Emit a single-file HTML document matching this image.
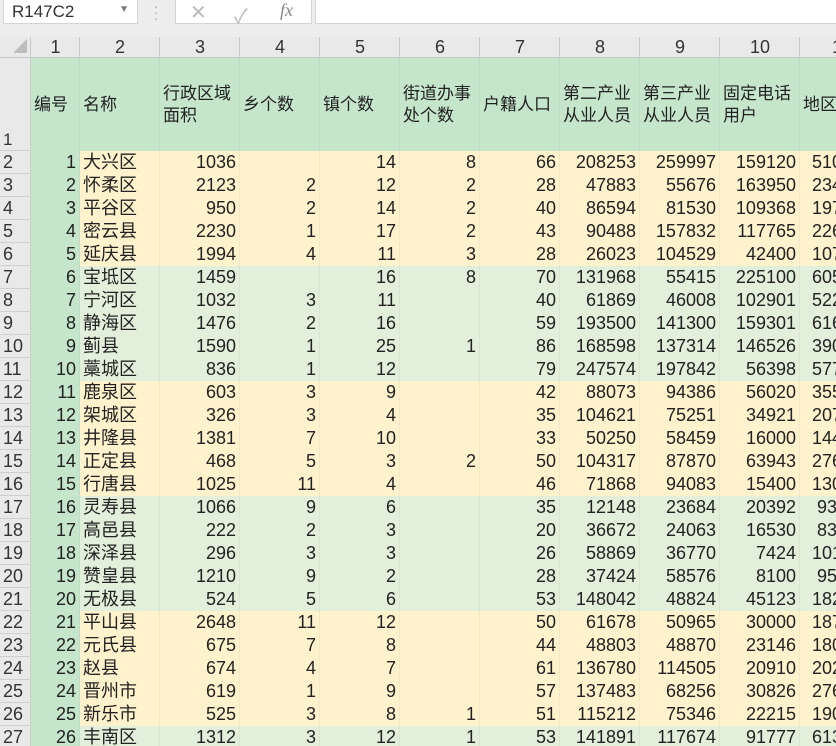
<!DOCTYPE html>
<html><head><meta charset="utf-8"><style>
body{margin:0;width:836px;height:746px;overflow:hidden;background:#ededed;font-family:"Liberation Sans","Noto Sans CJK SC",sans-serif;position:relative}
.box{position:absolute;background:#fff;border:1px solid #d4d4d4;top:-1px;height:23px}
#grid{position:absolute;left:0;top:37px;width:836px;height:709px;overflow:hidden}
table{border-collapse:collapse;table-layout:fixed;width:911px}
td{padding:0 4px;white-space:nowrap;overflow:hidden;font-size:18px;color:#222;height:23px;line-height:23px;text-align:right;border:0;box-shadow:inset -1px 0 rgba(0,0,0,0.04)}
tr.ch td{height:21px;line-height:21px;background:#e9e9e9;color:#333;text-align:center;box-shadow:inset -1px -1px #c8c8c8;font-size:18px}
td.rh{background:#e9e9e9;color:#333;text-align:left;padding-left:3px;box-shadow:inset -1px -1px #cfcfcf;font-size:18px}
tr.h td{height:93px;background:#c6e6cc;text-align:left;line-height:22px;font-size:17px;padding:0 3px;white-space:normal}
tr.h td.rh{background:#e9e9e9;vertical-align:bottom;line-height:22px}
td.c1{background:#c6e6cc}
tr.o td{background:#fff2cc}
tr.g td{background:#e2efda}
tr.o td.rh,tr.g td.rh{background:#e9e9e9}
tr.o td.c1,tr.g td.c1{background:#c6e6cc}
td.n{text-align:left;padding-left:3px}
td.l{text-align:left;padding-left:12px}
</style></head><body>
<div class="box" style="left:3px;width:133px"><span style="position:absolute;left:8px;top:2px;font-size:17px;color:#333">R147C2</span><span style="position:absolute;right:8px;top:4px;font-size:10px;color:#777">▼</span></div>
<div style="position:absolute;left:154px;top:3px;color:#aaa;font-size:14px;line-height:6px">·<br>·<br>·</div>
<div class="box" style="left:175px;width:135px"><span style="position:absolute;left:14px;top:0;font-size:20px;color:#bbb">✕</span><span style="position:absolute;left:58px;top:0;font-size:20px;color:#bbb">✓</span><span style="position:absolute;left:104px;top:0;font-size:18px;color:#888;font-style:italic;font-family:'Liberation Serif',serif">fx</span></div>
<div class="box" style="left:315px;width:530px"></div>
<div id="grid"><table>
<colgroup><col style="width:31px"><col style="width:49px"><col style="width:80px"><col style="width:80px"><col style="width:80px"><col style="width:80px"><col style="width:80px"><col style="width:80px"><col style="width:80px"><col style="width:80px"><col style="width:80px"><col style="width:111px"></colgroup>
<tr class="ch"><td style="background:#e9e9e9"><span style="display:inline-block;width:0;height:0;border-left:14px solid transparent;border-bottom:14px solid #bdbdbd;margin-left:8px"></span></td><td>1</td><td>2</td><td>3</td><td>4</td><td>5</td><td>6</td><td>7</td><td>8</td><td>9</td><td>10</td><td style="text-align:left;padding-left:32px">11</td></tr>
<tr class="h"><td class="rh">1</td><td>编号</td><td>名称</td><td>行政区域面积</td><td>乡个数</td><td>镇个数</td><td>街道办事处个数</td><td>户籍人口</td><td>第二产业从业人员</td><td>第三产业从业人员</td><td>固定电话用户</td><td>地区生产总值</td></tr>
<tr class="o"><td class="rh">2</td><td class="c1">1</td><td class="n">大兴区</td><td>1036</td><td></td><td>14</td><td>8</td><td>66</td><td>208253</td><td>259997</td><td>159120</td><td class="l">5103</td></tr>
<tr class="o"><td class="rh">3</td><td class="c1">2</td><td class="n">怀柔区</td><td>2123</td><td>2</td><td>12</td><td>2</td><td>28</td><td>47883</td><td>55676</td><td>163950</td><td class="l">2345</td></tr>
<tr class="o"><td class="rh">4</td><td class="c1">3</td><td class="n">平谷区</td><td>950</td><td>2</td><td>14</td><td>2</td><td>40</td><td>86594</td><td>81530</td><td>109368</td><td class="l">1974</td></tr>
<tr class="o"><td class="rh">5</td><td class="c1">4</td><td class="n">密云县</td><td>2230</td><td>1</td><td>17</td><td>2</td><td>43</td><td>90488</td><td>157832</td><td>117765</td><td class="l">2265</td></tr>
<tr class="o"><td class="rh">6</td><td class="c1">5</td><td class="n">延庆县</td><td>1994</td><td>4</td><td>11</td><td>3</td><td>28</td><td>26023</td><td>104529</td><td>42400</td><td class="l">1075</td></tr>
<tr class="g"><td class="rh">7</td><td class="c1">6</td><td class="n">宝坻区</td><td>1459</td><td></td><td>16</td><td>8</td><td>70</td><td>131968</td><td>55415</td><td>225100</td><td class="l">6053</td></tr>
<tr class="g"><td class="rh">8</td><td class="c1">7</td><td class="n">宁河区</td><td>1032</td><td>3</td><td>11</td><td></td><td>40</td><td>61869</td><td>46008</td><td>102901</td><td class="l">5223</td></tr>
<tr class="g"><td class="rh">9</td><td class="c1">8</td><td class="n">静海区</td><td>1476</td><td>2</td><td>16</td><td></td><td>59</td><td>193500</td><td>141300</td><td>159301</td><td class="l">6163</td></tr>
<tr class="g"><td class="rh">10</td><td class="c1">9</td><td class="n">蓟县</td><td>1590</td><td>1</td><td>25</td><td>1</td><td>86</td><td>168598</td><td>137314</td><td>146526</td><td class="l">3903</td></tr>
<tr class="g"><td class="rh">11</td><td class="c1">10</td><td class="n">藁城区</td><td>836</td><td>1</td><td>12</td><td></td><td>79</td><td>247574</td><td>197842</td><td>56398</td><td class="l">5773</td></tr>
<tr class="o"><td class="rh">12</td><td class="c1">11</td><td class="n">鹿泉区</td><td>603</td><td>3</td><td>9</td><td></td><td>42</td><td>88073</td><td>94386</td><td>56020</td><td class="l">3553</td></tr>
<tr class="o"><td class="rh">13</td><td class="c1">12</td><td class="n">架城区</td><td>326</td><td>3</td><td>4</td><td></td><td>35</td><td>104621</td><td>75251</td><td>34921</td><td class="l">2073</td></tr>
<tr class="o"><td class="rh">14</td><td class="c1">13</td><td class="n">井隆县</td><td>1381</td><td>7</td><td>10</td><td></td><td>33</td><td>50250</td><td>58459</td><td>16000</td><td class="l">1443</td></tr>
<tr class="o"><td class="rh">15</td><td class="c1">14</td><td class="n">正定县</td><td>468</td><td>5</td><td>3</td><td>2</td><td>50</td><td>104317</td><td>87870</td><td>63943</td><td class="l">2763</td></tr>
<tr class="o"><td class="rh">16</td><td class="c1">15</td><td class="n">行唐县</td><td>1025</td><td>11</td><td>4</td><td></td><td>46</td><td>71868</td><td>94083</td><td>15400</td><td class="l">1303</td></tr>
<tr class="g"><td class="rh">17</td><td class="c1">16</td><td class="n">灵寿县</td><td>1066</td><td>9</td><td>6</td><td></td><td>35</td><td>12148</td><td>23684</td><td>20392</td><td class="l">&nbsp;93</td></tr>
<tr class="g"><td class="rh">18</td><td class="c1">17</td><td class="n">高邑县</td><td>222</td><td>2</td><td>3</td><td></td><td>20</td><td>36672</td><td>24063</td><td>16530</td><td class="l">&nbsp;83</td></tr>
<tr class="g"><td class="rh">19</td><td class="c1">18</td><td class="n">深泽县</td><td>296</td><td>3</td><td>3</td><td></td><td>26</td><td>58869</td><td>36770</td><td>7424</td><td class="l">1013</td></tr>
<tr class="g"><td class="rh">20</td><td class="c1">19</td><td class="n">赞皇县</td><td>1210</td><td>9</td><td>2</td><td></td><td>28</td><td>37424</td><td>58576</td><td>8100</td><td class="l">&nbsp;95</td></tr>
<tr class="g"><td class="rh">21</td><td class="c1">20</td><td class="n">无极县</td><td>524</td><td>5</td><td>6</td><td></td><td>53</td><td>148042</td><td>48824</td><td>45123</td><td class="l">1823</td></tr>
<tr class="o"><td class="rh">22</td><td class="c1">21</td><td class="n">平山县</td><td>2648</td><td>11</td><td>12</td><td></td><td>50</td><td>61678</td><td>50965</td><td>30000</td><td class="l">1873</td></tr>
<tr class="o"><td class="rh">23</td><td class="c1">22</td><td class="n">元氏县</td><td>675</td><td>7</td><td>8</td><td></td><td>44</td><td>48803</td><td>48870</td><td>23146</td><td class="l">1803</td></tr>
<tr class="o"><td class="rh">24</td><td class="c1">23</td><td class="n">赵县</td><td>674</td><td>4</td><td>7</td><td></td><td>61</td><td>136780</td><td>114505</td><td>20910</td><td class="l">2023</td></tr>
<tr class="o"><td class="rh">25</td><td class="c1">24</td><td class="n">晋州市</td><td>619</td><td>1</td><td>9</td><td></td><td>57</td><td>137483</td><td>68256</td><td>30826</td><td class="l">2763</td></tr>
<tr class="o"><td class="rh">26</td><td class="c1">25</td><td class="n">新乐市</td><td>525</td><td>3</td><td>8</td><td>1</td><td>51</td><td>115212</td><td>75346</td><td>22215</td><td class="l">1903</td></tr>
<tr class="g"><td class="rh">27</td><td class="c1">26</td><td class="n">丰南区</td><td>1312</td><td>3</td><td>12</td><td>1</td><td>53</td><td>141891</td><td>117674</td><td>91777</td><td class="l">6133</td></tr>
</table></div>
</body></html>
